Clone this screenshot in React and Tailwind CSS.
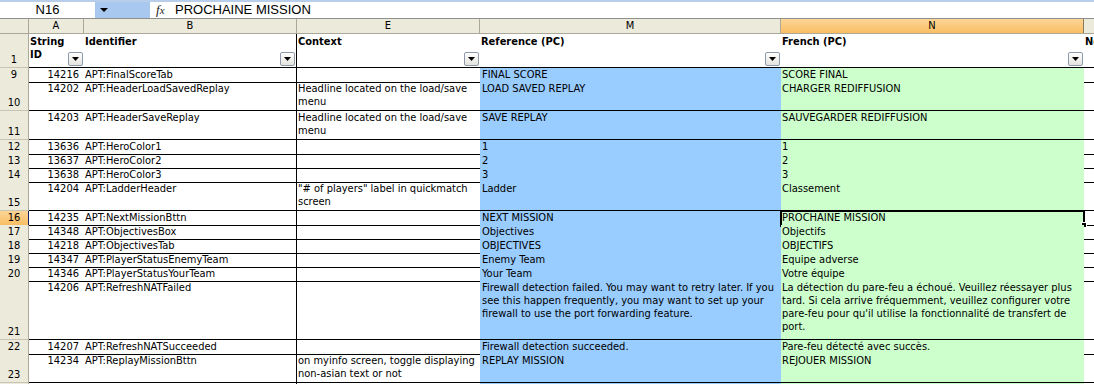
const rows = [
  { n: 9, h: 'h-[14px]', id: '14216', key: 'APT:FinalScoreTab', ctx: [], m: ['FINAL SCORE'], f: ['SCORE FINAL'] },
  { n: 10, h: 'h-[29px]', id: '14202', key: 'APT:HeaderLoadSavedReplay', ctx: ['Headline located on the load/save', 'menu'], m: ['LOAD SAVED REPLAY'], f: ['CHARGER REDIFFUSION'] },
  { n: 11, h: 'h-[29px]', id: '14203', key: 'APT:HeaderSaveReplay', ctx: ['Headline located on the load/save', 'menu'], m: ['SAVE REPLAY'], f: ['SAUVEGARDER REDIFFUSION'] },
  { n: 12, h: 'h-[14px]', id: '13636', key: 'APT:HeroColor1', ctx: [], m: ['1'], f: ['1'] },
  { n: 13, h: 'h-[14px]', id: '13637', key: 'APT:HeroColor2', ctx: [], m: ['2'], f: ['2'] },
  { n: 14, h: 'h-[14px]', id: '13638', key: 'APT:HeroColor3', ctx: [], m: ['3'], f: ['3'] },
  { n: 15, h: 'h-[29px]', id: '14204', key: 'APT:LadderHeader', ctx: ['"# of players" label in quickmatch', 'screen'], m: ['Ladder'], f: ['Classement'] },
  { n: 16, h: 'h-[14px]', id: '14235', key: 'APT:NextMissionBttn', ctx: [], m: ['NEXT MISSION'], f: ['PROCHAINE MISSION'], sel: true },
  { n: 17, h: 'h-[14px]', id: '14348', key: 'APT:ObjectivesBox', ctx: [], m: ['Objectives'], f: ['Objectifs'] },
  { n: 18, h: 'h-[14px]', id: '14218', key: 'APT:ObjectivesTab', ctx: [], m: ['OBJECTIVES'], f: ['OBJECTIFS'] },
  { n: 19, h: 'h-[14px]', id: '14347', key: 'APT:PlayerStatusEnemyTeam', ctx: [], m: ['Enemy Team'], f: ['Equipe adverse'] },
  { n: 20, h: 'h-[14px]', id: '14346', key: 'APT:PlayerStatusYourTeam', ctx: [], m: ['Your Team'], f: ['Votre équipe'] },
  {
    n: 21, h: 'h-[59px]', id: '14206', key: 'APT:RefreshNATFailed', ctx: [],
    m: ['Firewall detection failed. You may want to retry later. If you', 'see this happen frequently, you may want to set up your', 'firewall to use the port forwarding feature.'],
    f: ['La détection du pare-feu a échoué. Veuillez réessayer plus', 'tard. Si cela arrive fréquemment, veuillez configurer votre', "pare-feu pour qu'il utilise la fonctionnalité de transfert de", 'port.'],
  },
  { n: 22, h: 'h-[14px]', id: '14207', key: 'APT:RefreshNATSucceeded', ctx: [], m: ['Firewall detection succeeded.'], f: ['Pare-feu détecté avec succès.'] },
  { n: 23, h: 'h-[29px]', id: '14234', key: 'APT:ReplayMissionBttn', ctx: ['on myinfo screen, toggle displaying', 'non-asian text or not'], m: ['REPLAY MISSION'], f: ['REJOUER MISSION'] },
];

const grid = 'grid grid-cols-[29px_55px_213px_183px_301px_303px_1fr]';

function Lines({ lines }) {
  return lines.map((l) => (
    <div key={l} className="whitespace-nowrap">{l}</div>
  ));
}

function FilterButton() {
  return (
    <div className="col-start-1 row-start-1 self-end justify-self-end mr-[1px] mb-[1px] w-[15px] h-[14px] rounded-[2px] border border-[#8E9AAB] bg-gradient-to-b from-white to-[#E4E3DD] flex items-center justify-center">
      <svg width="7" height="4" viewBox="0 0 7 4">
        <path d="M0 0h7L3.5 4z" fill="#000" />
      </svg>
    </div>
  );
}

function HeadCell({ lines, border, noButton }) {
  return (
    <div className={`grid grid-cols-1 grid-rows-1 border-b border-black overflow-hidden font-bold ${border || ''}`}>
      <div className="col-start-1 row-start-1 leading-[13px] pt-[1px] pl-[1px]">
        {lines.map((l) => (
          <div key={l} className="whitespace-nowrap">{l}</div>
        ))}
      </div>
      {!noButton && <FilterButton />}
    </div>
  );
}

export default function App() {
  return (
    <div className="w-[1094px] h-[384px] overflow-hidden bg-white text-black text-[11px] leading-[13px] font-['DejaVu_Sans_Condensed','Liberation_Sans',sans-serif]">
      {/* formula bar */}
      <div className="h-[19px] flex border-t-2 border-[#B7CDEA] border-b border-b-[#8F8F8F] font-['Liberation_Sans',sans-serif] text-[13px] leading-[16px]">
        <div className="w-[95px] flex items-center justify-center bg-white">N16</div>
        <div className="w-[55px] bg-[#A8C8EF] flex items-center pl-[5px]">
          <svg width="8" height="4" viewBox="0 0 8 4">
            <path d="M0 0h8L4 4z" fill="#000" />
          </svg>
        </div>
        <div className="w-[25px] flex items-center pl-[6px] italic font-['Liberation_Serif',serif] text-[13px] text-[#222]">
          f<span className="text-[11px]">x</span>
        </div>
        <div className="flex-1 flex items-center">PROCHAINE MISSION</div>
      </div>

      {/* column letters */}
      <div className={`${grid} h-[15px] bg-[#EBEADB] border-b border-[#ACA899] leading-[14px]`}>
        <div className="border-r border-[#ACA899]" />
        <div className="text-center border-r border-[#ACA899]">A</div>
        <div className="text-center border-r border-[#ACA899]">B</div>
        <div className="text-center border-r border-[#ACA899]">E</div>
        <div className="text-center border-r border-[#ACA899]">M</div>
        <div className="text-center border-r border-[#8A7B5A] bg-gradient-to-b from-[#FCD596] to-[#F9BE63]">N</div>
        <div />
      </div>

      {/* header row 1 */}
      <div className={`${grid} h-[34px]`}>
        <div className="bg-[#EBEADB] border-r border-[#ACA899] border-b border-b-[#C7C4B4] flex items-end justify-center pb-[1px]">1</div>
        <HeadCell lines={['String', 'ID']} />
        <HeadCell lines={['Identifier']} border="border-r border-r-black" />
        <HeadCell lines={['Context']} />
        <HeadCell lines={['Reference (PC)']} />
        <HeadCell lines={['French (PC)']} />
        <HeadCell noButton lines={['No']} />
      </div>

      {/* data rows */}
      {rows.map((r) => (
        <div key={r.n} className={`${grid} ${r.h}`}>
          <div className={`border-r border-b flex items-end justify-center pb-[1px] ${r.sel ? 'bg-gradient-to-b from-[#FCD596] to-[#F9BE63] border-r-[#10246A] border-b-[#C7A15A]' : 'bg-[#EBEADB] border-r-[#ACA899] border-b-[#C7C4B4]'}`}>
            {r.n}
          </div>
          <div className="border-b border-black text-right pr-[5px] whitespace-nowrap">{r.id}</div>
          <div className="border-b border-r border-black pl-[1px] whitespace-nowrap overflow-hidden">{r.key}</div>
          <div className="border-b border-black pl-[1px] overflow-hidden"><Lines lines={r.ctx} /></div>
          <div className="border-b border-black bg-[#99CCFF] pl-[2px] overflow-hidden"><Lines lines={r.m} /></div>
          <div className={`border-b border-black bg-[#CCFFCC] pl-[1px] relative ${r.sel ? 'outline-2 outline-black -outline-offset-1' : 'overflow-hidden'}`}>
            <Lines lines={r.f} />
            {r.sel && <div className="absolute right-[-3px] bottom-[-3px] w-[6px] h-[6px] bg-black border border-white" />}
          </div>
          <div className="border-b border-black" />
        </div>
      ))}

      {/* row 24, cut off */}
      <div className={`${grid} h-[14px]`}>
        <div className="bg-[#EBEADB] border-r border-[#ACA899]" />
        <div />
        <div className="border-r border-black" />
        <div />
        <div className="bg-[#99CCFF]" />
        <div className="bg-[#CCFFCC]" />
        <div />
      </div>
    </div>
  );
}
